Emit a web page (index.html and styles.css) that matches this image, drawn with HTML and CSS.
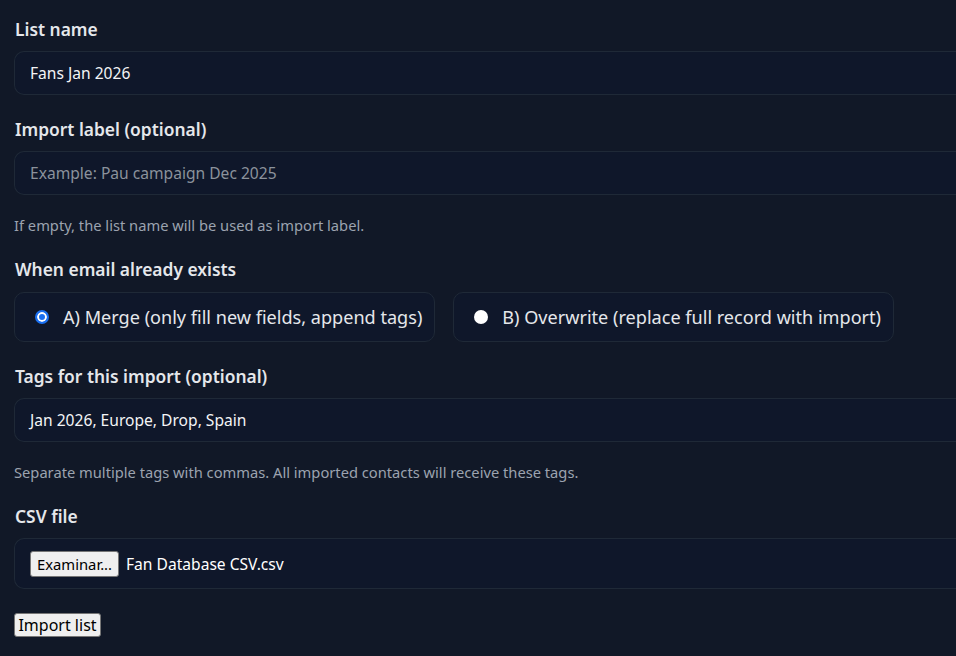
FILE: index.html
```html
<!DOCTYPE html>
<html lang="en">
<head>
<meta charset="utf-8">
<title>Import list</title>
<link rel="stylesheet" href="styles.css">
</head>
<body>
<form class="form">
  <div class="field">
    <label class="label">List name</label>
    <div class="input">Fans Jan 2026</div>
  </div>
  <div class="field">
    <label class="label">Import label (optional)</label>
    <div class="input placeholder">Example: Pau campaign Dec 2025</div>
    <p class="help">If empty, the list name will be used as import label.</p>
  </div>
  <div class="field">
    <label class="label label-tight">When email already exists</label>
    <div class="options">
      <label class="option"><span class="radio checked"></span><span>A) Merge (only fill new fields, append tags)</span></label>
      <label class="option"><span class="radio"></span><span>B) Overwrite (replace full record with import)</span></label>
    </div>
  </div>
  <div class="field">
    <label class="label">Tags for this import (optional)</label>
    <div class="input">Jan 2026, Europe, Drop, Spain</div>
    <p class="help">Separate multiple tags with commas. All imported contacts will receive these tags.</p>
  </div>
  <div class="field">
    <label class="label">CSV file</label>
    <div class="input file">
      <span class="btn btn-file">Examinar...</span>
      <span class="file-name">Fan Database CSV.csv</span>
    </div>
  </div>
  <span class="btn btn-submit">Import list</span>
</form>
</body>
</html>
```
FILE: styles.css
```css
html, body {
  margin: 0;
  padding: 0;
  background: #111827;
  overflow: hidden;
  height: 100%;
}
body {
  font-family: "Noto Sans", "Open Sans", sans-serif;
  color: #e5e7eb;
}
.form {
  box-sizing: border-box;
  width: 100%;
  padding: 18px 0 0 14px;
  display: flex;
  flex-direction: column;
  align-items: flex-start;
}
.field {
  width: 100%;
  margin-bottom: 23px;
}
.label {
  display: block;
  font-size: 17.4px;
  font-weight: 600;
  line-height: 23px;
  margin: 0 0 10px 1px;
  color: #e5e7eb;
}
.label-tight {
  margin-bottom: 11px;
}
.input {
  box-sizing: border-box;
  width: 100%;
  height: 44px;
  border: 1px solid #1f2937;
  border-right: none;
  border-radius: 10px 0 0 10px;
  background: #0f172a;
  padding: 0 15px;
  display: flex;
  align-items: center;
  font-size: 15.6px;
  color: #f3f4f6;
}
.placeholder {
  color: #8b929c;
}
.help {
  margin: 20px 0 0 0;
  font-size: 14.7px;
  line-height: 20px;
  color: #9ca3af;
}
.options {
  display: flex;
  gap: 18px;
}
.option {
  box-sizing: border-box;
  height: 50px;
  border: 1px solid #1f2937;
  border-radius: 10px;
  background: #0f172a;
  display: flex;
  align-items: center;
  gap: 14px;
  padding: 0 12px 0 20px;
  font-size: 18.1px;
  color: #e5e7eb;
}
.radio {
  box-sizing: border-box;
  width: 14px;
  height: 14px;
  border-radius: 50%;
  background: #ffffff;
  flex: none;
}
.radio.checked {
  background: #1a6ff0;
  border: 2px solid #1a6ff0;
  box-shadow: inset 0 0 0 2px #ffffff;
}
.file {
  height: 51px;
  padding: 0 15px;
  gap: 7px;
}
.btn {
  box-sizing: border-box;
  display: inline-flex;
  align-items: center;
  justify-content: center;
  background: #efefef;
  border: 1px solid #767676;
  border-radius: 3px;
  color: #000000;
  font-family: "Noto Sans", "Open Sans", sans-serif;
}
.btn-file {
  width: 89px;
  height: 26px;
  font-size: 14.8px;
}
.file-name {
  font-size: 15.6px;
  color: #ffffff;
}
.btn-submit {
  width: 87px;
  height: 24px;
  font-size: 16px;
  margin-top: 1px;
}
```
